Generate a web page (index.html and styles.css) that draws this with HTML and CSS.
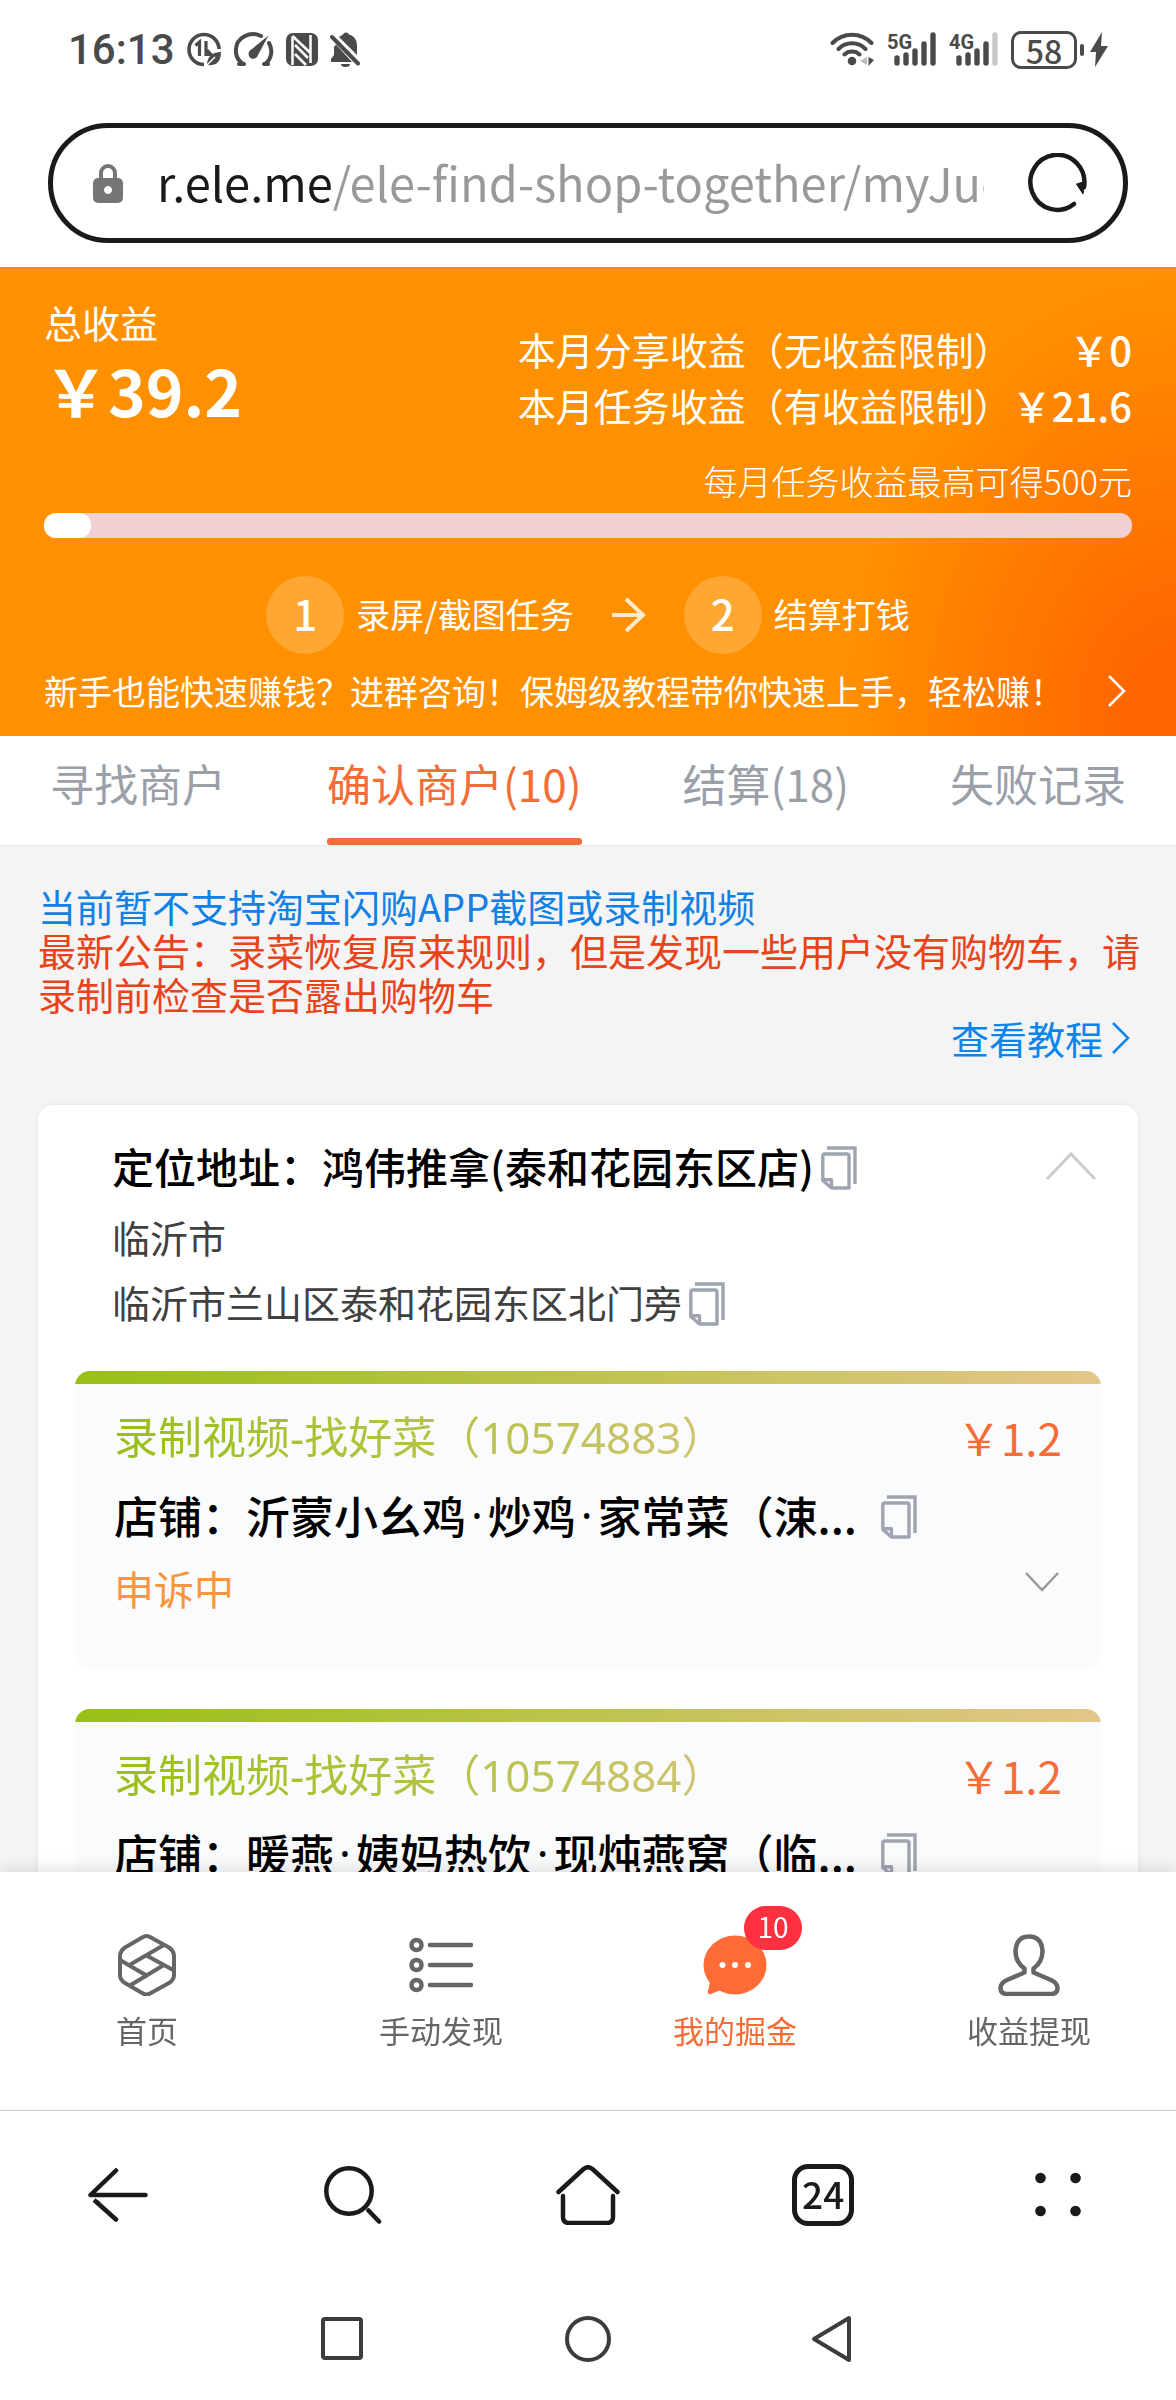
FILE: index.html
```html
<!DOCTYPE html>
<html lang="zh-CN">
<head>
<meta charset="utf-8">
<meta name="viewport" content="width=device-width, initial-scale=1">
<title>我的掘金</title>
<link rel="stylesheet" href="styles.css">
</head>
<body>
<svg class="sprite" aria-hidden="true">
  <symbol id="copy" viewBox="0 0 36 44">
    <path d="M6 2H34V38" fill="none" stroke="#9fa5b0" stroke-width="3.4"/>
    <path d="M3.500 8H26a2 2 0 0 1 2 2V42H10.500L1.800 34.500V9.700A1.700 1.700 0 0 1 3.500 8ZM2 33.800H10.500V42" fill="none" stroke="#9fa5b0" stroke-width="3.400" stroke-linejoin="round"/>
  </symbol>
</svg>
<div class="app">
  <div class="status">
    <div class="status-side">
      <span class="clock">16:13</span>
      <svg class="s-data" width="35" height="35" viewBox="0 0 35 35" fill="none" stroke="#4a4a4a">
        <path d="M17 32.500A15 15 0 1 1 32 17" stroke-width="3.600"/>
        <path d="M8.500 13.500L12.500 10V24M19 9V22.500H24L20 18" stroke-width="3.200"/>
        <path d="M20 33C20 24 26 20 34 20C34 29 30 34 20 33Z" fill="#4a4a4a" stroke="none"/>
        <path d="M20 33L28 25" stroke="#fff" stroke-width="1.500"/>
      </svg>
      <svg width="40" height="35" viewBox="0 0 40 35" fill="none" stroke="#4a4a4a" stroke-width="4" stroke-linecap="round">
        <path d="M9 32A16 16 0 0 1 2 17A17 15.500 0 0 1 27 4M35 11A16 16 0 0 1 31 32"/>
        <path d="M5 32H10M30 32H34" stroke-width="4"/>
        <path d="M34.500 3.500L24 23A4.800 4.800 0 1 1 16 18.500Z" fill="#4a4a4a" stroke="none"/>
      </svg>
      <svg width="32" height="34" viewBox="0 0 32 34">
        <rect width="32" height="33" rx="7" fill="#4a4a4a"/>
        <path d="M6.500 3.500V32M24.500 2V30" stroke="#fff" stroke-width="2.500"/>
        <path d="M6.500 3L24.500 20M9 12L22 25M9 21L20 32" stroke="#fff" stroke-width="2.600"/>
      </svg>
      <svg width="31" height="35" viewBox="0 0 31 35">
        <path d="M6 12.500L22 30H1V27L4 23V15ZM9 5L13 2.500A3.200 3.200 0 0 1 19 2.500C25 4 27 9 27 14V23Z" fill="#4a4a4a"/>
        <path d="M2 5L28 31.500" stroke="#4a4a4a" stroke-width="4" stroke-linecap="round"/>
        <path d="M11 32H20A4.500 3 0 0 1 11 32Z" fill="#4a4a4a"/>
      </svg>
    </div>
    <div class="status-side right">
      <svg width="45" height="35" viewBox="0 0 45 35" fill="none" stroke="#4a4a4a" stroke-width="4" stroke-linecap="round">
        <path d="M2.500 11A27 27 0 0 1 41.500 11M8.500 17A19 19 0 0 1 35.500 17M14.500 22.500A11 11 0 0 1 29.500 22.500"/>
        <circle cx="22" cy="29" r="4.300" fill="#4a4a4a" stroke="none"/>
        <path d="M37 25V33L30 29Z" fill="#bbb" stroke="none"/><path d="M38.500 25L44 28L38.500 34Z" fill="#4a4a4a" stroke="none"/>
      </svg>
      <svg class="signal" width="50" height="36" viewBox="0 0 50 36">
        <text x="0" y="17">5G</text>
        <path d="M10 26V31M19 23V31M28 19V31M37 12V31M46 3V31" stroke="#4a4a4a" stroke-width="5.400" stroke-linecap="round"/>
      </svg>
      <svg class="signal" width="50" height="36" viewBox="0 0 50 36">
        <text x="0" y="17">4G</text>
        <path d="M10 26V31M19 23V31M28 19V31M37 12V31" stroke="#4a4a4a" stroke-width="5.400" stroke-linecap="round"/>
        <path d="M46 3V31" stroke="#c9c9c9" stroke-width="5.400" stroke-linecap="round"/>
      </svg>
      <span class="battery">58</span>
      <svg width="18" height="35" viewBox="0 0 18 35"><path d="M12 0L0 20H6L5 35L18 14H11Z" fill="#4a4a4a"/></svg>
    </div>
  </div>

  <form class="address">
    <svg width="30" height="39" viewBox="0 0 30 39"><path d="M8 16V9a7 7 0 0 1 14 0v7" fill="none" stroke="#757575" stroke-width="4"/><path fill-rule="evenodd" d="M5 14H25a5 5 0 0 1 5 5V34a5 5 0 0 1-5 5H5a5 5 0 0 1-5-5V19a5 5 0 0 1 5-5ZM15 22a4 4 0 1 0 .1 0Z" fill="#757575"/></svg>
    <input class="url" type="text" aria-label="网址" value="r.ele.me/ele-find-shop-together/myJuejin">
    <button type="button" class="plain" aria-label="刷新">
      <svg width="60" height="60" viewBox="0 0 60 60"><path d="M47 51A27 27.500 0 1 1 57 34" fill="none" stroke="#1a1a1a" stroke-width="4.500" stroke-linecap="round"/><path d="M49.500 31L58 28.500L56 41Z" fill="#1a1a1a" stroke="#1a1a1a" stroke-linejoin="round"/></svg>
    </button>
  </form>

  <header class="income">
    <div class="income-top">
      <div>
        <div class="total-label">总收益</div>
        <div class="total">￥39.2</div>
      </div>
      <dl class="month">
        <dt>本月分享收益（无收益限制）</dt><dd>￥0</dd>
        <dt>本月任务收益（有收益限制）</dt><dd>￥21.6</dd>
      </dl>
    </div>
    <p class="limit">每月任务收益最高可得500元</p>
    <div class="progress"><div class="progress-fill" style="width:4.32%"></div></div>
    <div class="steps">
      <span class="step"><b>1</b><span>录屏/截图任务</span></span>
      <svg width="34" height="36" viewBox="0 0 34 36" fill="none" stroke="#fff" stroke-opacity=".8" stroke-width="4"><path d="M0 18H31M14 2L31 18L14 34"/></svg>
      <span class="step"><b>2</b><span>结算打钱</span></span>
    </div>
    <a class="tip" href="#">新手也能快速赚钱？进群咨询！保姆级教程带你快速上手，轻松赚！
      <svg width="24" height="32" viewBox="0 0 24 32" fill="none" stroke="#fff" stroke-width="2.500"><path d="M1 1L16 16L1 31"/></svg>
    </a>
  </header>

  <nav class="tabs">
    <a href="#">寻找商户</a>
    <a href="#" class="on">确认商户(10)</a>
    <a href="#">结算(18)</a>
    <a href="#">失败记录</a>
  </nav>

  <main class="feed">
    <section class="notice">
      <p class="info">当前暂不支持淘宝闪购APP截图或录制视频</p>
      <p class="warn">最新公告：录菜恢复原来规则，但是发现一些用户没有购物车，请录制前检查是否露出购物车</p>
      <a class="guide" href="#">查看教程<svg width="20" height="32" viewBox="0 0 20 32" fill="none" stroke="#0b84ec" stroke-width="2.500"><path d="M2 1L17 16L2 31"/></svg></a>
    </section>

    <section class="place">
      <div class="place-head">
        <h2>定位地址：鸿伟推拿(泰和花园东区店)</h2>
        <button type="button" class="plain copy" aria-label="复制店名"><svg width="36" height="44"><use href="#copy"/></svg></button>
        <button type="button" class="plain fold" aria-label="收起"><svg width="50" height="28" viewBox="0 0 50 28" fill="none" stroke="#ccc" stroke-width="3"><path d="M1 27L25 2L49 27"/></svg></button>
      </div>
      <p class="line">临沂市</p>
      <p class="line">临沂市兰山区泰和花园东区北门旁<button type="button" class="plain copy" aria-label="复制地址"><svg width="36" height="44"><use href="#copy"/></svg></button></p>

      <div class="tasks">
        <article class="task">
          <div class="task-head"><h3>录制视频-找好菜（10574883）</h3><span class="price">￥1.2</span></div>
          <p class="shop">店铺：沂蒙小幺鸡<i>·</i>炒鸡<i>·</i>家常菜（涑...<button type="button" class="plain copy" aria-label="复制店铺"><svg width="36" height="44"><use href="#copy"/></svg></button></p>
          <div class="state"><span>申诉中</span>
            <button type="button" class="plain more" aria-label="展开"><svg width="34" height="20" viewBox="0 0 34 20" fill="none" stroke="#999" stroke-width="2.500"><path d="M1 1L17 18L33 1"/></svg></button></div>
        </article>

        <article class="task">
          <div class="task-head"><h3>录制视频-找好菜（10574884）</h3><span class="price">￥1.2</span></div>
          <p class="shop">店铺：暖燕<i>·</i>姨妈热饮<i>·</i>现炖燕窝（临...<button type="button" class="plain copy" aria-label="复制店铺"><svg width="36" height="44"><use href="#copy"/></svg></button></p>
        </article>
      </div>
    </section>
  </main>

  <nav class="bottom">
    <a href="#">
      <svg width="58" height="62" viewBox="0 0 58 62" fill="none" stroke="#666" stroke-width="4" stroke-linejoin="round"><path d="M25 3Q28.500 1 32 3L51 13.500Q56 17 56 22V41Q56 46 51 49L32 59.500Q28.500 61.500 25 59.500L7 49Q2 46 2 41V22Q2 17 7 13.500Z"/><path d="M45 11.500L11.500 31M2 26L28.500 41.500M28.500 21.500L56 36.500M45 31.500L12 51.500"/></svg>
      首页</a>
    <a href="#">
      <svg width="64" height="62" viewBox="0 0 64 62" fill="none" stroke="#666"><g stroke-width="4.500"><circle cx="7.500" cy="11" r="5"/><circle cx="7.500" cy="31" r="5"/><circle cx="7.500" cy="51" r="5"/></g><path d="M21 11H62M21 31H62M21 51H62" stroke-width="4.500" stroke-linecap="round"/></svg>
      手动发现</a>
    <a href="#" class="on">
      <span class="icon-box">
        <svg width="64" height="62" viewBox="0 0 64 62"><ellipse cx="32" cy="31" rx="31.500" ry="29.500" fill="#ff6b37"/><path d="M7 46Q6 55 4.500 58Q5 61 8 60L20 55Z" fill="#ff6b37"/><g fill="#fff"><circle cx="19.500" cy="31" r="3"/><circle cx="32" cy="31" r="3"/><circle cx="45" cy="31" r="3"/></g></svg>
        <span class="badge">10</span>
      </span>
      我的掘金</a>
    <a href="#">
      <svg width="62" height="62" viewBox="0 0 62 62" fill="none" stroke="#666" stroke-width="4.500" stroke-linejoin="round"><path d="M26.500 38.500V34.500Q17.500 28 17.500 17Q18.500 2.500 31 2.500T44.500 17Q44.500 28 35.500 34.500V38.500L53 46Q59.500 49 59.500 54Q59.500 60 53 60H9Q2.500 60 2.500 54Q2.500 49 9 46Z"/></svg>
      收益提现</a>
  </nav>

  <div class="toolbar">
    <button type="button" class="plain" aria-label="后退"><svg width="60" height="54" viewBox="0 0 60 54" fill="none" stroke="#1a1a1a" stroke-width="4.500" stroke-linecap="round" stroke-linejoin="round"><path d="M28 2.500L2.500 27H57.500"/><path d="M9 34.500L28 51.500"/><path d="M6 32L11 36" stroke-linecap="butt"/></svg></button>
    <button type="button" class="plain" aria-label="搜索"><svg width="58" height="58" viewBox="0 0 58 58" fill="none" stroke="#1a1a1a" stroke-width="4.500"><circle cx="25" cy="25" r="22.700"/><path d="M44.500 44.500L55 55.500" stroke-linecap="round"/></svg></button>
    <button type="button" class="plain" aria-label="主页"><svg width="64" height="60" viewBox="0 0 64 60" fill="none" stroke="#1a1a1a" stroke-width="4.500" stroke-linecap="round" stroke-linejoin="round"><path d="M2.500 27L27 4.500Q32 0 37 4.500L61.500 27"/><path d="M7 31V52Q7 58 13 58H51Q57 58 57 52V31"/></svg></button>
    <button type="button" class="plain count" aria-label="24 个标签页">24</button>
    <button type="button" class="plain" aria-label="菜单"><svg width="46" height="46" viewBox="0 0 46 46" fill="#1a1a1a"><circle cx="5.500" cy="6" r="5.300"/><circle cx="40.500" cy="6" r="5.300"/><circle cx="5.500" cy="39" r="5.300"/><circle cx="40.500" cy="39" r="5.300"/></svg></button>
  </div>

  <div class="system">
    <button type="button" class="plain" aria-label="最近任务"><svg width="46" height="48" viewBox="0 0 46 48"><rect x="4" y="4" width="38" height="39" rx="2" fill="none" stroke="#3c3c3c" stroke-width="4"/></svg></button>
    <button type="button" class="plain" aria-label="桌面"><svg width="46" height="48" viewBox="0 0 46 48"><circle cx="23" cy="24" r="21" fill="none" stroke="#3c3c3c" stroke-width="4"/></svg></button>
    <button type="button" class="plain" aria-label="返回"><svg width="46" height="48" viewBox="0 0 46 48"><path d="M38 3V45L3 24Z" fill="none" stroke="#3c3c3c" stroke-width="4" stroke-linejoin="round"/></svg></button>
  </div>
</div>
</body>
</html>
```
FILE: styles.css
```css
* { box-sizing: border-box; }
body, p, h2, h3, dl, dd { margin: 0; }
body {
  font-family: "Noto Sans CJK SC", sans-serif;
  font-size: 38px;
  color: #000;
  background: #fff;
}
h2, h3, i { font-weight: 400; font-style: normal; }
a { color: inherit; text-decoration: none; }
svg { display: block; flex: none; }
.sprite { position: absolute; width: 0; height: 0; }
.plain {
  display: flex;
  flex: none;
  padding: 0;
  border: 0;
  background: none;
  font: inherit;
  color: inherit;
}

.app {
  display: flex;
  flex-direction: column;
  height: 100vh;
}
.app > * { flex: none; }

/* phone status bar */
.status {
  display: flex;
  justify-content: space-between;
  align-items: center;
  height: 99px;
  padding: 0 68px;
  color: #4a4a4a;
}
.status-side { display: flex; align-items: center; gap: 12px; }
.clock { font: 500 42px/50px Roboto, sans-serif; }
.signal { overflow: visible; }
.signal text { font: 700 20px Roboto, sans-serif; fill: #4a4a4a; }
.battery {
  position: relative;
  width: 66px;
  margin-right: 1px;
  border: 3px solid #4a4a4a;
  border-radius: 10px;
  font-size: 32px;
  font-weight: 500;
  line-height: 32px;
  text-align: center;
}
.battery::after {
  content: "";
  position: absolute;
  left: 66px;
  top: 10px;
  width: 4px;
  height: 12px;
  border-radius: 2px;
  background: #4a4a4a;
}

/* address bar */
.address {
  display: flex;
  align-items: center;
  height: 120px;
  margin: 24px 48px;
  padding: 0 36px 0 40px;
  border: 5px solid #1a1a1a;
  border-radius: 60px;
}
.url {
  flex: 1;
  min-width: 0;
  margin: 0 43px 0 34px;
  padding: 0 0 2px;
  border: 0;
  outline: 0;
  font: inherit;
  font-size: 47px;
  line-height: 70px;
  color: transparent;
  background: linear-gradient(90deg, #1a1a1a 174px, #999 174px);
  background-clip: text;
  -webkit-background-clip: text;
}

/* income summary */
.income {
  padding: 29px 44px 21px;
  color: #fff;
  background: radial-gradient(ellipse 330px 440px at 100% 96%, #ff6600 15%, #ff9000 100%) #ff9000;
}
.income-top {
  display: flex;
  justify-content: space-between;
  align-items: flex-end;
}
.total-label { line-height: 52px; }
.total { padding-bottom: 3px; font-size: 64px; font-weight: 700; line-height: 82px; }
.month {
  display: grid;
  grid-template-columns: auto auto;
  line-height: 56px;
}
.month dd { font-size: 40px; font-weight: 500; text-align: right; }
.limit {
  margin-top: 24px;
  font-size: 34px;
  font-weight: 300;
  line-height: 48px;
  text-align: right;
}
.progress {
  height: 25px;
  margin-top: 8px;
  border-radius: 12px;
  background: #f0d0d3;
}
.progress-fill { height: 100%; border-radius: 12px; background: #fff; }
.steps {
  display: flex;
  justify-content: center;
  align-items: center;
  gap: 38px;
  margin-top: 38px;
  font-size: 34px;
}
.step { display: flex; align-items: center; gap: 12px; }
.step span { padding-bottom: 4px; }
.step b {
  width: 78px;
  height: 78px;
  border-radius: 50%;
  background: rgba(255, 255, 255, .2);
  font-size: 42px;
  font-weight: 500;
  line-height: 74px;
  text-align: center;
}
.tip {
  display: flex;
  justify-content: space-between;
  align-items: center;
  margin-top: 13px;
  font-size: 34px;
  line-height: 48px;
}

/* tabs */
.tabs {
  display: flex;
  justify-content: space-between;
  padding: 17px 50px 0;
  border-bottom: 1px solid #e8e8e8;
  font-size: 44px;
  line-height: 60px;
  color: #9b9fa8;
}
.tabs a { padding-bottom: 32px; }
.tabs .on { position: relative; color: #f56c36; }
.tabs .on::after {
  content: "";
  position: absolute;
  inset: auto 0 0;
  height: 7px;
  border-radius: 3px;
  background: #f56c36;
}

/* scrolling content */
.app > .feed {
  flex: 1;
  min-height: 0;
  overflow: hidden auto;
  scrollbar-width: none;
  background: #f4f4f4;
}
.notice { padding: 38px 36px 45px 38px; line-height: 44px; }
.info { color: #1380e4; }
.warn { color: #e8431a; }
.guide {
  display: flex;
  justify-content: flex-end;
  align-items: center;
  gap: 8px;
  padding-right: 9px;
  color: #0b84ec;
}
.place {
  margin: 0 38px 38px;
  padding: 31px 37px;
  border-radius: 15px;
  background: #fff;
  box-shadow: 0 0 4px rgba(0, 0, 0, .08);
}
.place-head { display: flex; align-items: center; padding: 0 5px 8px 37px; }
.place-head h2 { font-size: 42px; font-weight: 500; line-height: 60px; }
.copy { margin: 4px 0 0 7px; }
.fold { margin-left: auto; }
.line {
  display: flex;
  align-items: center;
  padding-left: 37px;
  line-height: 65px;
  color: #404040;
}
.tasks {
  display: grid;
  gap: 39px;
  margin-top: 37px;
}
.task {
  padding: 36px 39px 54px;
  border-radius: 15px;
  background: linear-gradient(90deg, #98c015, #e3c689) top / 100% 13px no-repeat #fafbfd;
}
.task-head {
  display: flex;
  justify-content: space-between;
  font-size: 44px;
  line-height: 60px;
}
.task h3 {
  font-family: "Noto Sans", "Noto Sans CJK SC", sans-serif;
  font-size: 44px;
  color: transparent;
  background: linear-gradient(90deg, #98c015, #d0c474);
  background-clip: text;
  -webkit-background-clip: text;
}
.price { color: #f56c36; }
.shop {
  display: flex;
  align-items: center;
  margin-top: 18px;
  font-size: 44px;
  font-weight: 500;
  line-height: 60px;
}
.shop i { padding: 0 5px; font-family: "Noto Sans", sans-serif; }
.shop .copy { margin-left: 24px; }
.state {
  display: flex;
  justify-content: space-between;
  align-items: flex-start;
  margin-top: 15px;
  font-size: 40px;
  line-height: 56px;
  color: #f7963c;
}
.more { margin: 12px 3px 0 0; }

/* page navigation */
.bottom {
  position: relative;
  display: grid;
  grid-template-columns: repeat(4, 1fr);
  padding: 62px 0 60px;
  background: #fff;
  box-shadow: 0 0 18px rgba(0, 0, 0, .16);
  font-size: 31px;
  line-height: 40px;
  color: #666;
}
.bottom a {
  display: flex;
  flex-direction: column;
  align-items: center;
  gap: 14px;
}
.bottom .on { color: #f56c36; }
.icon-box { position: relative; }
.badge {
  position: absolute;
  left: 41px;
  top: -28px;
  width: 58px;
  height: 44px;
  border-radius: 22px;
  background: #ff3040;
  color: #fff;
  font-size: 28px;
  line-height: 41px;
  text-align: center;
}

/* browser toolbar and system keys */
.toolbar {
  position: relative;
  display: grid;
  grid-template-columns: repeat(5, 1fr);
  place-items: center;
  height: 169px;
  border-top: 1px solid #ccc;
  background: #fff;
  color: #1a1a1a;
}
.count {
  justify-content: center;
  width: 62px;
  height: 62px;
  border: 5px solid #1a1a1a;
  border-radius: 16px;
  font-size: 37px;
  font-weight: 500;
  line-height: 48px;
}
.system {
  display: flex;
  justify-content: center;
  gap: 200px;
  padding: 36px 0 37px;
  background: #fff;
}
```
